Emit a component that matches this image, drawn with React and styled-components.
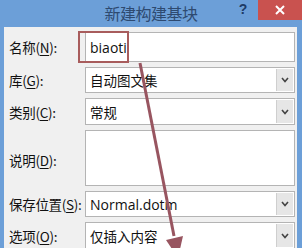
import React from "react";
import styled, { createGlobalStyle } from "styled-components";

const Global = createGlobalStyle`
  html, body { margin: 0; padding: 0; }
  body { width: 302px; height: 248px; overflow: hidden; background: #f0f0f0; }
`;

const Window = styled.div`
  position: relative;
  width: 302px;
  height: 248px;
  overflow: hidden;
  background: #6c9fd8;
  display: flex;
  flex-direction: column;
  font-family: "Noto Sans CJK SC", "Noto Sans", sans-serif;
`;

const TitleBar = styled.div`
  height: 27px;
  flex: none;
  display: flex;
  align-items: flex-start;
  position: relative;
`;

const Title = styled.div`
  position: absolute;
  left: 0;
  right: 0;
  top: 3px;
  text-align: center;
  font-size: 16px;
  line-height: 20px;
  color: #2e4a70;
  letter-spacing: -0.5px;
`;

const Controls = styled.div`
  margin-left: auto;
  display: flex;
  align-items: flex-start;
`;

const Help = styled.div`
  width: 30px;
  height: 20px;
  font-family: "Liberation Sans", sans-serif;
  font-weight: bold;
  font-size: 14px;
  line-height: 18px;
  color: #1e3b66;
  text-align: center;
`;

const Close = styled.div`
  width: 44px;
  height: 20px;
  background: #c9524f;
  color: #fff;
  display: flex;
  align-items: center;
  justify-content: center;
`;

const Body = styled.div`
  flex: 1;
  margin: 0 5px 0 4px;
  background: #f0f0f0;
  padding: 5px 2px 0 5px;
  display: flex;
  flex-direction: column;
  gap: 5px;
`;

const Row = styled.div`
  display: flex;
  align-items: ${(p) => (p.$top ? "flex-start" : "center")};
  height: ${(p) => p.$h}px;
  flex: none;
`;

const Label = styled.div`
  width: 76px;
  flex: none;
  font-size: 13.5px;
  color: #111;
  white-space: nowrap;
  letter-spacing: -0.3px;
  padding-top: ${(p) => p.$pt || 0}px;
  u { text-decoration: underline; text-underline-offset: 2px; }
`;

const Field = styled.div`
  flex: 1;
  align-self: stretch;
  box-sizing: border-box;
  background: #fff;
  border: 1px solid #b4b4b4;
  display: flex;
  align-items: center;
  padding-left: 4px;
  font-size: ${(p) => (p.$latin ? "14px" : "13.5px")};
  font-family: ${(p) =>
    p.$latin ? '"Open Sans", "Noto Sans", sans-serif' : '"Noto Sans CJK SC", sans-serif'};
  color: #111;
`;

const Value = styled.span`
  flex: 1;
`;

const DropButton = styled.div`
  width: 16px;
  align-self: stretch;
  background: #e6e6e6;
  border-left: 1px solid #cfcfcf;
  margin: 1px 1px 1px 0;
  display: flex;
  align-items: center;
  justify-content: center;
`;

const Highlight = styled.div`
  position: absolute;
  left: 78px;
  top: 31px;
  width: 47px;
  height: 28px;
  border: 2px solid #a85c5c;
`;

const ArrowLayer = styled.svg`
  position: absolute;
  left: 0;
  top: 0;
  pointer-events: none;
`;

const Chevron = () => (
  <svg width="8" height="6" viewBox="0 0 8 6">
    <polyline points="1,1 4,4.5 7,1" fill="none" stroke="#444" strokeWidth="1.6" />
  </svg>
);

const Select = ({ children, latin }) => (
  <Field $latin={latin}>
    <Value>{children}</Value>
    <DropButton>
      <Chevron />
    </DropButton>
  </Field>
);

export default function App() {
  return (
    <>
      <Global />
      <Window>
        <TitleBar>
          <Title>新建构建基块</Title>
          <Controls>
            <Help>?</Help>
            <Close>
              <svg width="10" height="10" viewBox="0 0 10 10">
                <path d="M1 1 L9 9 M9 1 L1 9" stroke="#fff" strokeWidth="2" />
              </svg>
            </Close>
          </Controls>
        </TitleBar>
        <Body>
          <Row $h={30}>
            <Label>名称(<u>N</u>):</Label>
            <Field $latin>biaoti</Field>
          </Row>
          <Row $h={26}>
            <Label>库(<u>G</u>):</Label>
            <Select>自动图文集</Select>
          </Row>
          <Row $h={27}>
            <Label>类别(<u>C</u>):</Label>
            <Select>常规</Select>
          </Row>
          <Row $h={56} $top>
            <Label $pt={20}>说明(<u>D</u>):</Label>
            <Field />
          </Row>
          <Row $h={26}>
            <Label>保存位置(<u>S</u>):</Label>
            <Select latin>Normal.dotm</Select>
          </Row>
          <Row $h={27}>
            <Label>选项(<u>O</u>):</Label>
            <Select>仅插入内容</Select>
          </Row>
        </Body>
        <Highlight />
        <ArrowLayer width="302" height="248" viewBox="0 0 302 248">
          <line x1="140" y1="63" x2="174" y2="236" stroke="#985560" strokeWidth="3" />
          <polygon points="166,240 183,236 178,258" fill="#985560" />
        </ArrowLayer>
      </Window>
    </>
  );
}
